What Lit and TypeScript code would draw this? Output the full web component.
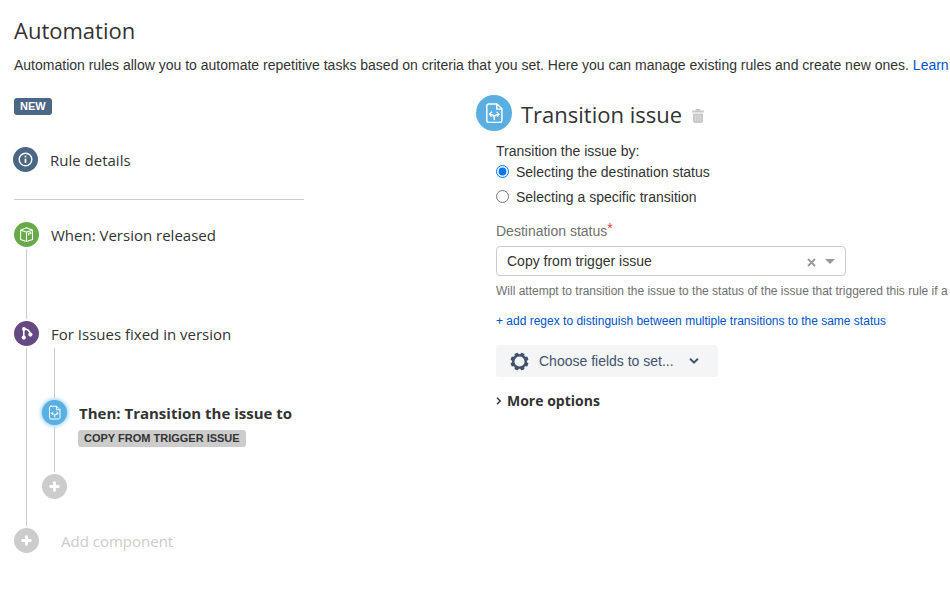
import { LitElement, html, css, svg } from "lit";
import { customElement, property, state } from "lit/decorators.js";

const glyphs: Record<string, unknown> = {
  info: svg`<circle cx="12.5" cy="12.5" r="6.3" fill="none" stroke="#fff" stroke-width="1.4"/>
    <path d="M12.5 11.6v4.4" stroke="#fff" stroke-width="1.7"/><circle cx="12.5" cy="9.5" r="1" fill="#fff"/>`,
  box: svg`<g fill="none" stroke="#fff" stroke-width="1.1" stroke-linejoin="round" stroke-linecap="round">
    <path d="M6.6 8.2 12.5 5.8l6 2.4v9.2l-6 2-5.9-2z"/><path d="M6.6 8.2l5.9 1.9 6-1.9M12.5 10.1v9.3M14.6 13v-1.6l2.2-1v1.4"/></g>`,
  branch: svg`<g stroke="#fff" fill="#fff"><path d="M9.8 7.8v9.6M10 7.8c3.2.2 5.9 2.6 6.6 6" fill="none" stroke-width="1.6"/>
    <circle cx="9.9" cy="7.9" r="1.9" stroke="none"/><circle cx="9.8" cy="16.6" r="2.1" stroke="none"/><circle cx="16.4" cy="13.6" r="2.1" stroke="none"/></g>`,
  transition: svg`<g fill="none" stroke="#fff" stroke-width="1" stroke-linejoin="round" stroke-linecap="round">
    <path d="M9 6.2h5.6l3.4 3.4v7.9a1.5 1.5 0 0 1-1.5 1.5H9a1.5 1.5 0 0 1-1.5-1.5V7.7a1.5 1.5 0 0 1 1.5-1.5zM14.4 6.5v3.3h3.3"/>
    <path d="M12.7 17v-1.6q-.2-1.7-2.9-2M12.7 15.4q.2-1.7 2.9-2"/>
    <path d="M10.8 11.9 9.4 13.3l1.2 1.5M14.6 11.9l1.4 1.4-1.2 1.5"/></g>`,
  plus: svg`<path d="M12.5 8.6v7.8M8.6 12.5h7.8" stroke="#fff" stroke-width="2.8" stroke-linecap="round"/>`,
};

@customElement("round-icon")
class RoundIcon extends LitElement {
  @property() name = "plus";
  static styles = css`
    :host { display: block; flex: none; width: 25px; height: 25px; border-radius: 50%; background: #ccc; }
    :host([name="info"]) { background: #4a6785; }
    :host([name="box"]) { background: #67ab49; }
    :host([name="branch"]) { background: #654982; }
    :host([name="transition"]) { background: #59afe1; }
    :host([selected]) { box-shadow: 0 0 5px #59afe1; }
    :host([large]) { width: 36px; height: 36px; }
    svg { display: block; width: 100%; height: 100%; }
  `;
  render() {
    return html`<svg viewBox="0 0 25 25" aria-hidden="true">${glyphs[this.name]}</svg>`;
  }
}

@customElement("rule-chain")
class RuleChain extends LitElement {
  static styles = css`
    :host { display: block; font-family: "Segoe UI", "Open Sans", sans-serif; font-size: 15px; line-height: 25px; color: #333; }
    .lozenge { display: block; width: fit-content; padding: 0 6px; border-radius: 3px; background: #ccc; color: #333;
      font: bold 11px/17px "Liberation Sans", Arial, sans-serif; text-transform: uppercase; white-space: nowrap; }
    .new { background: #4a6785; color: #fff; }
    .details { display: flex; gap: 12px; margin: 32px 0 27px -1px; }
    .details span { padding-top: 1px; height: 24px; }
    hr { height: 1px; margin: 0 0 22px; border: 0; background: #ccc; max-width: 290px; }
    a { color: inherit; text-decoration: none; }
    ol { list-style: none; margin: 0; padding: 0; }
    li { display: grid; grid-template-columns: 25px 1fr; }
    .rail { display: flex; flex-direction: column; align-items: center; gap: 2px; padding-bottom: 2px; }
    .rail::after { content: ""; flex: 1; width: 1px; background: #ccc; }
    .label { display: block; padding: 1px 0 0 12px; height: 24px; }
    .trigger { min-height: 99px; }
    .nested { padding: 2px 0 29px 3px; }
    .stem { width: 1px; height: 50px; margin: 0 0 2px 12px; background: #ccc; }
    .action { min-height: 74px; }
    .action .label { font-weight: bold; }
    .action .lozenge { margin: 5px 0 0 11px; }
    button { display: block; padding: 0; border: 0; background: none; border-radius: 50%; cursor: pointer; }
    .add { padding-left: 22px; color: #ccc; }
  `;
  render() {
    return html`
      <span class="lozenge new">New</span>
      <a class="details" href="#details"><round-icon name="info"></round-icon><span>Rule details</span></a>
      <hr />
      <ol>
        <li class="trigger">
          <div class="rail"><round-icon name="box"></round-icon></div>
          <a class="label" href="#trigger">When: Version released</a>
        </li>
        <li>
          <div class="rail"><round-icon name="branch"></round-icon></div>
          <div>
            <a class="label" href="#branch">For Issues fixed in version</a>
            <div class="nested">
              <div class="stem"></div>
              <ol>
                <li class="action">
                  <div class="rail"><round-icon name="transition" selected></round-icon></div>
                  <div>
                    <a class="label" href="#action">Then: Transition the issue to</a>
                    <span class="lozenge">Copy from trigger issue</span>
                  </div>
                </li>
                <li><button aria-label="Add to branch"><round-icon name="plus"></round-icon></button></li>
              </ol>
            </div>
          </div>
        </li>
        <li>
          <button aria-labelledby="add"><round-icon name="plus"></round-icon></button>
          <a id="add" class="label add" href="#add">Add component</a>
        </li>
      </ol>
    `;
  }
}

@customElement("transition-form")
class TransitionForm extends LitElement {
  @state() private mode = "status";
  static styles = css`
    :host { display: block; min-width: 0; font: 14px/20px "Liberation Sans", Arial, sans-serif; color: #333; }
    header { display: flex; align-items: center; gap: 9px; }
    h2 { margin: 0; padding-top: 2px; font: 400 22px/32px "Segoe UI", "Open Sans", sans-serif; }
    button { font: inherit; border: 0; background: none; padding: 0; cursor: pointer; }
    svg { display: block; }
    .trash { margin: 6px 0 0 1px; }
    .body { padding: 10px 0 0 20px; }
    fieldset { margin: 0; padding: 0; border: 0; }
    legend { padding: 0; }
    .options { margin-top: -2px; }
    .radio { display: flex; align-items: center; gap: 7px; height: 25px; }
    .radio input { margin: 0; width: 13px; height: 13px; }
    .field { display: block; margin-top: 12px; color: #707070; }
    .req { color: #d04437; vertical-align: 3px; line-height: 1; }
    .picker { position: relative; max-width: 350px; margin-top: 5px; }
    select { appearance: none; display: block; box-sizing: border-box; width: 100%; height: 30px; padding: 0 60px 0 10px;
      border: 1px solid #ccc; border-radius: 4px; background: #fff; color: #333; font: inherit; }
    .clear { position: absolute; right: 30px; top: 12px; }
    .caret { position: absolute; right: 11px; top: 13px; pointer-events: none; }
    .hint, .regex { margin: 5px 0 0; font-size: 12px; white-space: nowrap; overflow: hidden; }
    .hint { color: #707070; }
    .regex { margin-top: 10px; }
    a { color: #0052cc; text-decoration: none; }
    .choose { display: flex; align-items: center; gap: 10px; height: 32px; margin-top: 14px; padding: 0 17px 0 14px;
      border-radius: 3px; background: #f4f5f7; color: #42526e; }
    .choose .down { margin-left: 3px; }
    .more { display: flex; align-items: center; gap: 5px; margin-top: 14px; color: #333;
      font: bold 14px/20px "Segoe UI", "Open Sans", sans-serif; }
  `;
  render() {
    return html`
      <header>
        <round-icon name="transition" large></round-icon>
        <h2>Transition issue</h2>
        <button class="trash" aria-label="Delete">
          <svg width="12" height="14" viewBox="0 0 12 14"><path d="M0 1.6h3.5V1q0-1 1-1h3q1 0 1 1v.6H12v2H0zM1 4.6h10V12q0 2-2 2H3q-2 0-2-2z" fill="#c9c9c9"/><path d="M3.7 6v6M6 6v6M8.3 6v6" stroke="#dedede" stroke-width=".8"/></svg>
        </button>
      </header>
      <div class="body">
        <fieldset>
          <legend>Transition the issue by:</legend>
          <div class="options">
            <label class="radio"><input type="radio" name="mode" .checked=${this.mode === "status"} @change=${() => (this.mode = "status")} />Selecting the destination status</label>
            <label class="radio"><input type="radio" name="mode" .checked=${this.mode === "specific"} @change=${() => (this.mode = "specific")} />Selecting a specific transition</label>
          </div>
        </fieldset>
        <label class="field" for="dest">Destination status<span class="req">*</span></label>
        <div class="picker">
          <select id="dest"><option>Copy from trigger issue</option></select>
          <button class="clear" aria-label="Clear"><svg width="9" height="9" viewBox="0 0 9 9"><path d="M1 1l7 7M8 1L1 8" stroke="#999" stroke-width="1.8"/></svg></button>
          <svg class="caret" width="10" height="5" viewBox="0 0 10 5"><path d="M0 0h10L5 5z" fill="#999"/></svg>
        </div>
        <p class="hint">Will attempt to transition the issue to the status of the issue that triggered this rule if a</p>
        <p class="regex"><a href="#regex">+ add regex to distinguish between multiple transitions to the same status</a></p>
        <button class="choose">
          <svg width="19" height="19" viewBox="0 0 19 19"><circle cx="9.5" cy="9.5" r="6.2" fill="none" stroke="#42526e" stroke-width="2.3"/>
            ${[22.5, 67.5, 112.5, 157.5, 202.5, 247.5, 292.5, 337.5].map((a) => svg`<path d="M7 3.5 7.8.6q1.7-.5 3.4 0l.8 2.9z" fill="#42526e" transform="rotate(${a} 9.5 9.5)"/>`)}</svg>
          <span>Choose fields to set...</span>
          <svg class="down" width="14" height="8" viewBox="0 0 14 8"><path d="M3.6 2.2 7 5.6l3.4-3.4" fill="none" stroke="#42526e" stroke-width="2" stroke-linecap="round" stroke-linejoin="round"/></svg>
        </button>
        <button class="more" aria-expanded="false"><svg width="6" height="8" viewBox="0 0 6 8"><path d="M1 .8 4.2 4 1 7.2" fill="none" stroke="#333" stroke-width="1.4"/></svg>More options</button>
      </div>
    `;
  }
}

@customElement("app-root")
class AppRoot extends LitElement {
  static styles = css`
    :host { display: block; min-height: 100vh; background: #fff; color: #333; font: 14px/20px "Liberation Sans", Arial, sans-serif; }
    main { padding: 14px 0 0 14px; overflow: hidden; }
    h1 { margin: 0; font: 400 22px/32px "Segoe UI", "Open Sans", sans-serif; }
    .intro { margin: 9px 0 0; white-space: nowrap; }
    a { color: #0052cc; text-decoration: none; }
    .columns { display: grid; grid-template-columns: minmax(0, 462fr) minmax(0, 474fr); margin-top: 20px; }
    rule-chain { padding-top: 3px; }
  `;
  render() {
    return html`<main>
      <h1>Automation</h1>
      <p class="intro">Automation rules allow you to automate repetitive tasks based on criteria that you set. Here you can manage existing rules and create new ones. <a href="#learn">Learn</a></p>
      <div class="columns"><rule-chain></rule-chain><transition-form></transition-form></div>
    </main>`;
  }
}
